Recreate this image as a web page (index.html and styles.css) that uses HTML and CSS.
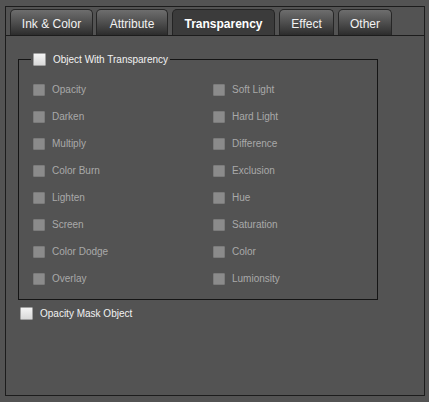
FILE: index.html
```html
<!DOCTYPE html>
<html>
<head>
<meta charset="utf-8">
<link rel="stylesheet" href="styles.css">
</head>
<body>
<div class="panel">
  <div class="tabs">
    <div class="tab t1">Ink &amp; Color</div>
    <div class="tab t2">Attribute</div>
    <div class="tab t3 active">Transparency</div>
    <div class="tab t4">Effect</div>
    <div class="tab t5">Other</div>
  </div>
  <div class="content">
    <div class="group">
      <div class="group-title">
        <span class="cb on"></span><span class="lbl on">Object With Transparency</span>
      </div>
      <div class="grid">
        <div class="item"><span class="cb"></span><span class="lbl">Opacity</span></div>
        <div class="item"><span class="cb"></span><span class="lbl">Soft Light</span></div>
        <div class="item"><span class="cb"></span><span class="lbl">Darken</span></div>
        <div class="item"><span class="cb"></span><span class="lbl">Hard Light</span></div>
        <div class="item"><span class="cb"></span><span class="lbl">Multiply</span></div>
        <div class="item"><span class="cb"></span><span class="lbl">Difference</span></div>
        <div class="item"><span class="cb"></span><span class="lbl">Color Burn</span></div>
        <div class="item"><span class="cb"></span><span class="lbl">Exclusion</span></div>
        <div class="item"><span class="cb"></span><span class="lbl">Lighten</span></div>
        <div class="item"><span class="cb"></span><span class="lbl">Hue</span></div>
        <div class="item"><span class="cb"></span><span class="lbl">Screen</span></div>
        <div class="item"><span class="cb"></span><span class="lbl">Saturation</span></div>
        <div class="item"><span class="cb"></span><span class="lbl">Color Dodge</span></div>
        <div class="item"><span class="cb"></span><span class="lbl">Color</span></div>
        <div class="item"><span class="cb"></span><span class="lbl">Overlay</span></div>
        <div class="item"><span class="cb"></span><span class="lbl">Lumionsity</span></div>
      </div>
    </div>
    <div class="mask-row">
      <span class="cb on"></span><span class="lbl on">Opacity Mask Object</span>
    </div>
  </div>
</div>
</body>
</html>
```
FILE: styles.css
```css
html, body {
  margin: 0;
  padding: 0;
  background: #535353;
}
body {
  width: 429px;
  height: 402px;
  overflow: hidden;
  font-family: "Liberation Sans", Arial, sans-serif;
}
.panel {
  margin: 6px 0 0 5px;
  width: 418px;
  height: 388px;
  border: 1px solid #1c1c1c;
  display: flex;
  flex-direction: column;
}
.tabs {
  display: flex;
  gap: 4px;
  padding: 2px 0 0 4px;
  height: 26px;
  border-bottom: 1px solid #1c1c1c;
}
.tab {
  box-sizing: border-box;
  height: 26px;
  border: 1px solid #262626;
  border-bottom: none;
  border-radius: 5px 5px 0 0;
  background: linear-gradient(to bottom, #6e6e6e 0%, #585858 35%, #3e3e3e 75%, #2c2c2c 100%);
  color: #f2f2f2;
  font-size: 12px;
  display: flex;
  align-items: center;
  justify-content: center;
  padding-top: 3px;
}
.t1 { width: 83px; }
.t2 { width: 72px; margin-left: -1px; }
.t3 { width: 103px; }
.t4 { width: 55px; }
.t5 { width: 54px; }
.tab.active {
  background: #3b3b3b;
  border-color: #242424;
  font-weight: bold;
  color: #ffffff;
}
.content {
  flex: 1;
  display: flex;
  flex-direction: column;
}
.group {
  margin: 23px 0 0 12px;
  width: 358px;
  border: 1px solid #151515;
  padding-bottom: 7px;
}
.group-title {
  display: flex;
  align-items: center;
  gap: 7px;
  width: fit-content;
  height: 13px;
  margin: -7px 0 0 12px;
  padding: 0 2px;
  background: #535353;
}
.grid {
  margin-top: 10px;
  padding-left: 14px;
  display: grid;
  grid-template-columns: 180px 1fr;
  grid-auto-rows: 27px;
}
.item {
  display: flex;
  align-items: center;
  gap: 7px;
}
.cb {
  box-sizing: border-box;
  width: 12px;
  height: 12px;
  flex: none;
  background: #8b8b8b;
  border: 1px solid #7b7b7b;
  border-radius: 1px;
}
.cb.on {
  width: 13px;
  height: 13px;
  background: linear-gradient(to bottom, #f4f4f4, #d8d8d8);
  border: 1px solid #a0a0a0;
}
.lbl {
  font-size: 10px;
  color: #a9a9a9;
  white-space: nowrap;
  line-height: 13px;
}
.lbl.on {
  color: #f2f2f2;
}
.mask-row {
  display: flex;
  align-items: center;
  gap: 7px;
  margin: 7px 0 0 14px;
  height: 13px;
}
```
